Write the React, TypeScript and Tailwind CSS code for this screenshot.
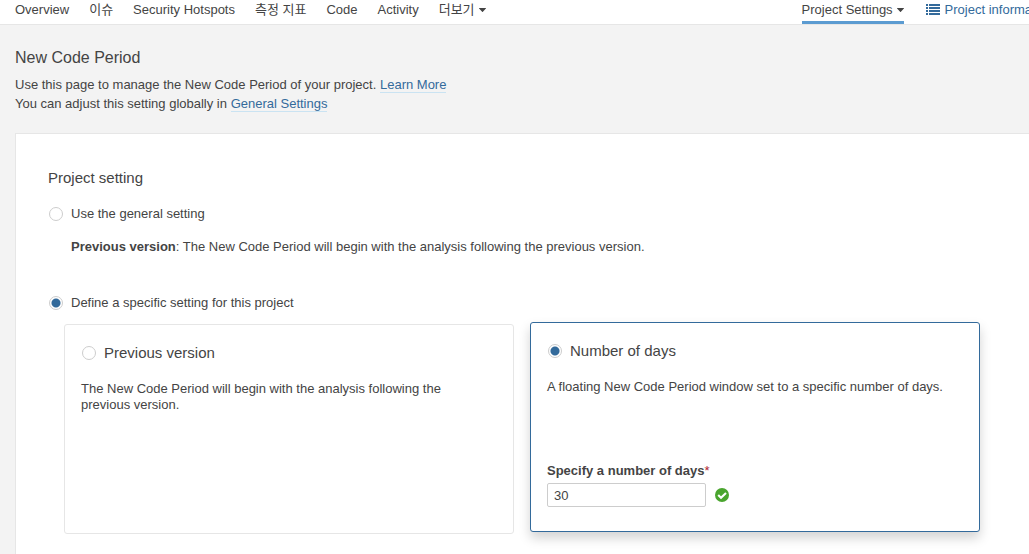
import { useState, type ReactNode } from "react";

type Level = "general" | "specific";
type Period = "previous" | "days";

interface RadioProps {
  id: string;
  name: string;
  checked: boolean;
  onChange: () => void;
}

function Radio({ id, name, checked, onChange }: RadioProps) {
  return (
    <input
      type="radio"
      id={id}
      name={name}
      checked={checked}
      onChange={onChange}
      className="size-3.5 shrink-0 appearance-none rounded-full border border-[#cdcdcd] bg-white checked:bg-[radial-gradient(circle,#336a9b_0,#336a9b_4px,#ffffff_5px)]"
    />
  );
}

function Caret() {
  return (
    <svg width="7" height="4" viewBox="0 0 7 4" className="ml-1 shrink-0" aria-hidden="true">
      <path d="M0.4 0h6.2c.4 0 .5.4.3.6L3.9 3.7a.6.6 0 0 1-.8 0L.1.6C-.1.4 0 0 .4 0z" fill="currentColor" />
    </svg>
  );
}

function ListIcon() {
  return (
    <svg width="14" height="12" viewBox="0 0 14 12" className="mr-[5px] shrink-0" fill="currentColor" aria-hidden="true">
      {[0, 3, 6, 9].map((y) => (
        <g key={y}>
          <rect x="0" y={y} width="2" height="2" />
          <rect x="3" y={y} width="11" height="2" />
        </g>
      ))}
    </svg>
  );
}

function ValidIcon() {
  return (
    <svg width="14" height="14" viewBox="0 0 14 14" aria-hidden="true">
      <circle cx="7" cy="7" r="7" fill="#4aa52e" />
      <path d="M3.2 7.1 6 9.7l5-4.8" fill="none" stroke="#fff" strokeWidth="2.1" />
    </svg>
  );
}

const tabs = ["Overview", "이슈", "Security Hotspots", "측정 지표", "Code", "Activity"];

function PeriodCard({
  id,
  title,
  selected,
  onSelect,
  description,
  children,
}: {
  id: string;
  title: string;
  selected: boolean;
  onSelect: () => void;
  description: string;
  children?: ReactNode;
}) {
  return (
    <div
      className={
        selected
          ? "flex min-h-[210px] w-[450px] -translate-y-0.5 flex-col rounded-[3px] border border-[#336a9b] bg-white px-4 pt-[18px] pb-6 shadow-[0_6px_12px_rgba(0,0,0,0.175)]"
          : "flex min-h-[210px] w-[450px] flex-col rounded-[3px] border border-[#e6e6e6] bg-white px-4 pt-[18px] pb-6"
      }
    >
      <div className="flex items-center gap-2 pl-px">
        <Radio id={id} name="period" checked={selected} onChange={onSelect} />
        <label htmlFor={id} className="text-[15px] leading-5">
          {title}
        </label>
      </div>
      <p className="mt-[18px] pr-3 leading-4">{description}</p>
      {children}
    </div>
  );
}

export default function App() {
  const [level, setLevel] = useState<Level>("specific");
  const [period, setPeriod] = useState<Period>("days");
  const [days, setDays] = useState("30");

  return (
    <div className="flex min-h-screen overflow-hidden bg-[#f3f3f3] font-['Liberation_Sans','Noto_Sans_CJK_KR',sans-serif] text-[13px] text-[#444444]">
      <div className="flex min-w-[1080px] flex-1 flex-col">
        <nav className="flex h-[25px] items-start justify-between border-b border-[#e6e6e6] bg-white pr-[27px] pl-[15px] leading-5">
          <div className="flex gap-5">
            {tabs.map((tab) => (
              <a key={tab} href="#" className="h-5 whitespace-nowrap">
                {tab}
              </a>
            ))}
            <button type="button" className="flex h-5 items-center">
              더보기
              <Caret />
            </button>
          </div>
          <div className="flex gap-[22px]">
            <button type="button" className="flex h-6 items-center border-b-[3px] border-[#5b9bd1] pb-px whitespace-nowrap">
              Project Settings
              <Caret />
            </button>
            <a href="#" className="flex h-5 items-center whitespace-nowrap text-[#336a9b]">
              <ListIcon />
              Project information
            </a>
          </div>
        </nav>

        <main className="flex flex-1 flex-col pr-5 pl-[15px]">
          <header className="pt-[21px] pb-5">
            <h1 className="text-base leading-6">New Code Period</h1>
            <p className="mt-[5px] leading-[19px]">
              Use this page to manage the New Code Period of your project.{" "}
              <a href="#" className="border-b border-[#cae3f2] text-[#336a9b]">
                Learn More
              </a>
              <br />
              You can adjust this setting globally in{" "}
              <a href="#" className="border-b border-[#cae3f2] text-[#336a9b]">
                General Settings
              </a>
            </p>
          </header>

          <section className="flex-1 border border-b-0 border-[#e6e6e6] bg-white px-8 pt-8">
            <h2 className="text-[15px] leading-6">Project setting</h2>

            <div className="mt-3.5 flex items-center gap-2 pl-px">
              <Radio id="general" name="level" checked={level === "general"} onChange={() => setLevel("general")} />
              <label htmlFor="general" className="leading-5">
                Use the general setting
              </label>
            </div>
            <p className="mt-[13px] ml-[23px] leading-5">
              <strong>Previous version</strong>: The New Code Period will begin with the analysis following the previous
              version.
            </p>

            <div className="mt-9 flex items-center gap-2 pl-px">
              <Radio id="specific" name="level" checked={level === "specific"} onChange={() => setLevel("specific")} />
              <label htmlFor="specific" className="leading-5">
                Define a specific setting for this project
              </label>
            </div>

            <div className="mt-[11px] ml-4 flex gap-4">
              <PeriodCard
                id="previous"
                title="Previous version"
                selected={period === "previous"}
                onSelect={() => setPeriod("previous")}
                description="The New Code Period will begin with the analysis following the previous version."
              />
              <PeriodCard
                id="number-of-days"
                title="Number of days"
                selected={period === "days"}
                onSelect={() => setPeriod("days")}
                description="A floating New Code Period window set to a specific number of days."
              >
                <div className="mt-auto">
                  <label htmlFor="days" className="flex leading-4 font-bold">
                    Specify a number of days
                    <span className="font-normal text-[#b0232f]">*</span>
                  </label>
                  <div className="mt-1 flex items-center gap-[9px]">
                    <input
                      id="days"
                      type="text"
                      value={days}
                      onChange={(event) => setDays(event.target.value)}
                      className="h-6 w-[159px] rounded-[2px] border border-[#cdcdcd] px-1.5 outline-none"
                    />
                    <ValidIcon />
                  </div>
                </div>
              </PeriodCard>
            </div>
          </section>
        </main>
      </div>
    </div>
  );
}
